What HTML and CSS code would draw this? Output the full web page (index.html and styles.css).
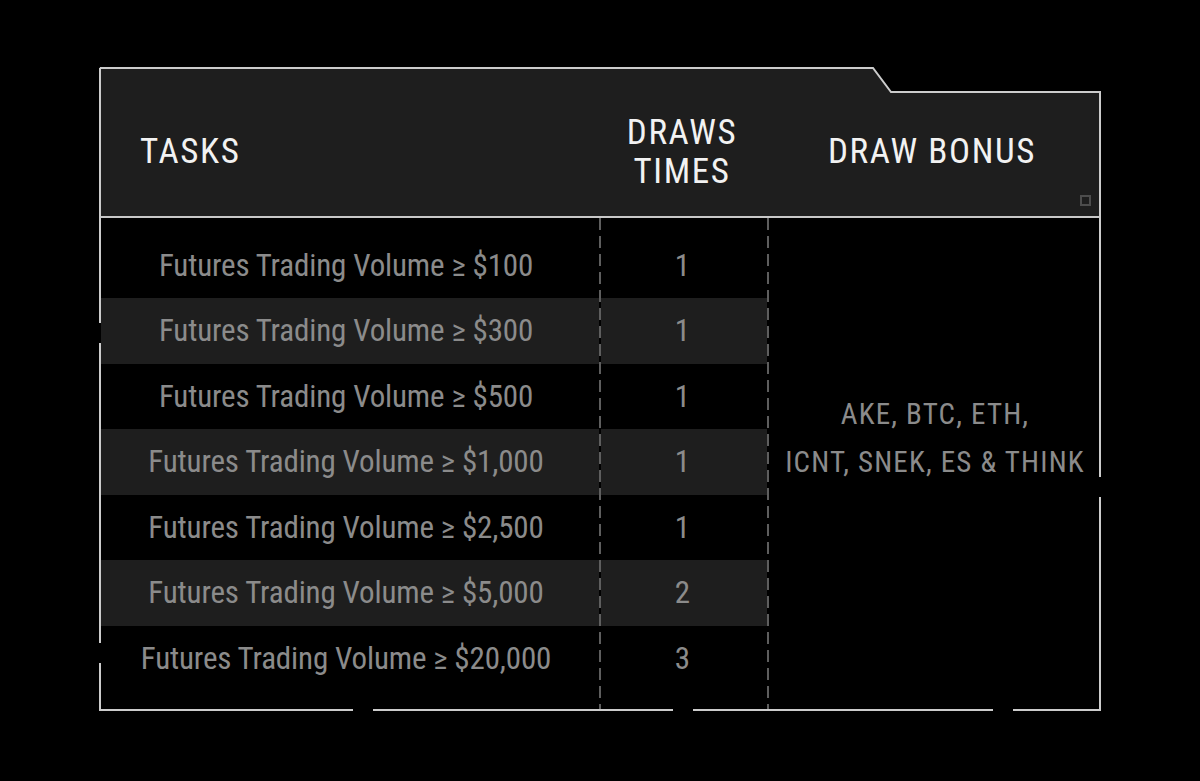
FILE: index.html
```html
<!DOCTYPE html>
<html lang="en">
<head>
<meta charset="utf-8">
<title>Draw tasks</title>
<link rel="stylesheet" href="styles.css">
</head>
<body>
<div class="card">
  <div class="head">
    <div class="h-tasks">TASKS</div>
    <div class="h-draws">DRAWS<br>TIMES</div>
    <div class="h-bonus">DRAW BONUS</div>
    <span class="mark"></span>
  </div>
  <div class="body">
    <div class="col col-tasks">
      <div class="cell">Futures Trading Volume ≥ $100</div>
      <div class="cell alt">Futures Trading Volume ≥ $300</div>
      <div class="cell">Futures Trading Volume ≥ $500</div>
      <div class="cell alt">Futures Trading Volume ≥ $1,000</div>
      <div class="cell">Futures Trading Volume ≥ $2,500</div>
      <div class="cell alt">Futures Trading Volume ≥ $5,000</div>
      <div class="cell">Futures Trading Volume ≥ $20,000</div>
    </div>
    <div class="col col-draws">
      <div class="cell">1</div>
      <div class="cell alt">1</div>
      <div class="cell">1</div>
      <div class="cell alt">1</div>
      <div class="cell">1</div>
      <div class="cell alt">2</div>
      <div class="cell">3</div>
    </div>
    <div class="col-bonus">
      <p>AKE, BTC, ETH,<br>ICNT, SNEK, ES &amp; THINK</p>
    </div>
  </div>
  <svg class="frame" width="1002" height="644" viewBox="0 0 1002 644">
    <path d="M1 1 H774 L792 25 H1001 V410 M1001 430 V643 H914 M894 643 H594 M574 643 H274 M254 643 H1 V596 M1 576 V276 M1 256 V1"/>
  </svg>
</div>
</body>
</html>
```

FILE: styles.css
```css
* { box-sizing: border-box; }

html, body {
  margin: 0;
  padding: 0;
  background: #000;
}

body {
  font-family: "Liberation Sans Narrow", "Roboto Condensed", "DejaVu Sans Condensed", "Liberation Sans", sans-serif;
  width: 1200px;
  height: 781px;
  overflow: hidden;
}

.card {
  position: relative;
  width: 1002px;
  margin: 67px 0 0 99px;
  padding-bottom: 2px;
}

.head {
  position: relative;
  display: grid;
  grid-template-columns: 500px 170px 332px;
  align-items: center;
  height: 151px;
  padding-top: 20px;
  background: #1e1e1e;
  border-bottom: 2px solid #c8c8c8;
  clip-path: polygon(0 0, 774px 0, 792px 25px, 100% 25px, 100% 100%, 0 100%);
  color: #f2f2f2;
  font-size: 35px;
  line-height: 39px;
  letter-spacing: 1.6px;
}

.h-tasks { padding-left: 41px; }
.h-draws { text-align: center; padding-right: 4px; }
.h-bonus { text-align: center; padding-right: 6px; }

.mark {
  position: absolute;
  right: 10px;
  bottom: 10px;
  width: 11px;
  height: 11px;
  border: 2px solid #4d4d4d;
}

.body {
  display: flex;
  height: 491px;
  color: #8b8b8b;
}

.col {
  display: flex;
  flex-direction: column;
  padding-top: 14.5px;
  padding-bottom: 18px;
}

.col-tasks {
  width: 500px;
  padding-left: 2px;
  font-size: 31px;
  letter-spacing: -0.15px;
}

.col-tasks .cell { padding-right: 8px; }

.col-draws {
  width: 170px;
  padding-left: 2px;
  padding-right: 2px;
  font-size: 31px;
  background:
    repeating-linear-gradient(to bottom, #5e5e5e 0 12px, transparent 12px 18px) left top / 2px 100% no-repeat,
    repeating-linear-gradient(to bottom, #5e5e5e 0 12px, transparent 12px 18px) right top / 2px 100% no-repeat;
}

.col-draws .cell { padding-right: 3px; }

.cell {
  height: 65.5px;
  display: flex;
  align-items: center;
  justify-content: center;
  white-space: nowrap;
}

.cell.alt { background: #1e1e1e; }

.col-bonus {
  flex: 1;
  display: flex;
  align-items: center;
  justify-content: center;
  padding-bottom: 50px;
  font-size: 29px;
  line-height: 47.5px;
  letter-spacing: 1.2px;
  text-align: center;
}

.col-bonus p { margin: 0; }

.frame {
  position: absolute;
  left: 0;
  top: 0;
  pointer-events: none;
}

.frame path {
  fill: none;
  stroke: #cccccc;
  stroke-width: 2;
}
```
